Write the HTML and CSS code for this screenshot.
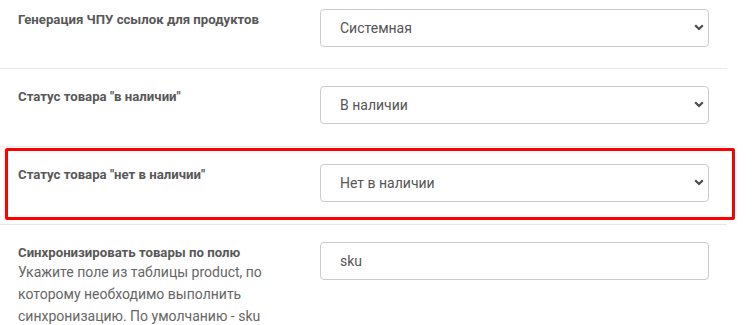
FILE: index.html
```html
<!DOCTYPE html>
<html lang="ru">
<head>
    <meta charset="UTF-8">
    <meta name="viewport" content="width=device-width, initial-scale=1.0">
    <title>Настройки синхронизации</title>
    <link rel="stylesheet" href="styles.css">
</head>
<body>
    <div class="settings">
        <div class="form-row first">
            <div class="form-label">
                <div class="label-title">Генерация ЧПУ ссылок для продуктов</div>
            </div>
            <div class="form-control">
                <div class="select-wrap">
                    <select class="field">
                        <option>Системная</option>
                    </select>
                    <svg class="chevron" width="10" height="7" viewBox="0 0 10 7"><path d="M1.2 1.3 L5 5 L8.8 1.3" fill="none" stroke="#4a4a4a" stroke-width="2.2"/></svg>
                </div>
            </div>
        </div>

        <div class="form-row">
            <div class="form-label">
                <div class="label-title">Статус товара "в наличии"</div>
            </div>
            <div class="form-control">
                <div class="select-wrap">
                    <select class="field">
                        <option>В наличии</option>
                    </select>
                    <svg class="chevron" width="10" height="7" viewBox="0 0 10 7"><path d="M1.2 1.3 L5 5 L8.8 1.3" fill="none" stroke="#4a4a4a" stroke-width="2.2"/></svg>
                </div>
            </div>
        </div>

        <div class="form-row marked">
            <div class="form-label">
                <div class="label-title">Статус товара "нет в наличии"</div>
            </div>
            <div class="form-control">
                <div class="select-wrap">
                    <select class="field">
                        <option>Нет в наличии</option>
                    </select>
                    <svg class="chevron" width="10" height="7" viewBox="0 0 10 7"><path d="M1.2 1.3 L5 5 L8.8 1.3" fill="none" stroke="#4a4a4a" stroke-width="2.2"/></svg>
                </div>
            </div>
            <div class="highlight"></div>
        </div>

        <div class="form-row last">
            <div class="form-label">
                <div class="label-title">Синхронизировать товары по полю</div>
                <div class="label-help">Укажите поле из таблицы product, по которому необходимо выполнить синхронизацию. По умолчанию - sku</div>
            </div>
            <div class="form-control">
                <input class="field" type="text" value="sku">
            </div>
        </div>
    </div>
</body>
</html>
```

FILE: styles.css
```css
* {
    margin: 0;
    padding: 0;
    box-sizing: border-box;
}

body {
    background: #fff;
    font-family: Roboto, "Liberation Sans", sans-serif;
    color: #555;
}

.settings {
    width: 727px;
}

.form-row {
    position: relative;
    display: grid;
    grid-template-columns: 302px 389px;
    padding: 17px 18px 22px;
    border-bottom: 1px solid #e8e8e8;
}

.form-row.first {
    padding-top: 9px;
    padding-bottom: 21px;
}

.form-row.last {
    border-bottom: none;
}

.form-label {
    padding-right: 40px;
}

.label-title {
    font-size: 13.2px;
    font-weight: 700;
    line-height: 20px;
    color: #585858;
    padding-top: 1px;
}

.label-help {
    margin-top: -2px;
    font-size: 14px;
    line-height: 22px;
    color: #666;
}

.select-wrap {
    position: relative;
}

.field {
    display: block;
    width: 100%;
    height: 38px;
    padding: 0 30px 0 19px;
    border: 1px solid #ccc;
    border-radius: 4px;
    background: #fff;
    font-family: Roboto, "Liberation Sans", sans-serif;
    font-size: 14px;
    color: #555;
    appearance: none;
    -webkit-appearance: none;
    outline: none;
}

.chevron {
    position: absolute;
    right: 5px;
    top: 15px;
    pointer-events: none;
}

.highlight {
    position: absolute;
    left: 5px;
    right: -8px;
    top: 1px;
    bottom: 4px;
    border: 3px solid #ff0000;
    border-radius: 2px;
    pointer-events: none;
}
```
